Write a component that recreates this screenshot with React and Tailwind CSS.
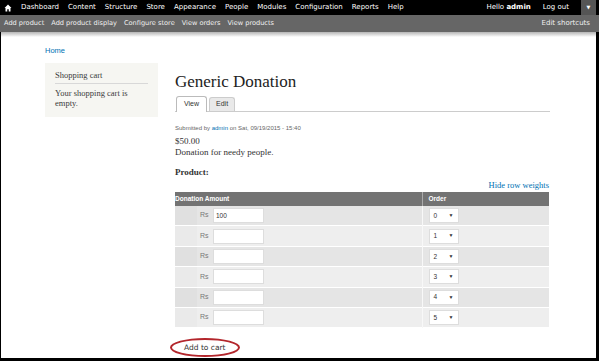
import React from 'react';

const topLinks = ['Dashboard', 'Content', 'Structure', 'Store', 'Appearance', 'People', 'Modules', 'Configuration', 'Reports', 'Help'];
const shortcuts = ['Add product', 'Add product display', 'Configure store', 'View orders', 'View products'];
const rows = [
  { amount: '100', order: '0' },
  { amount: '', order: '1' },
  { amount: '', order: '2' },
  { amount: '', order: '3' },
  { amount: '', order: '4' },
  { amount: '', order: '5' },
];

const sans = { fontFamily: '"DejaVu Sans", Verdana, sans-serif' };
const serif = { fontFamily: '"Liberation Serif", Georgia, serif' };
const arial = { fontFamily: '"Liberation Sans", Arial, sans-serif' };

function HomeIcon() {
  return (
    <svg width="8" height="8" viewBox="0 0 16 16" fill="#fff">
      <path d="M8 1 L1 8 H3 V15 H6.5 V10.5 H9.5 V15 H13 V8 H15 Z" />
    </svg>
  );
}

export default function App() {
  return (
    <div className="w-[599px] h-[361px] bg-black overflow-hidden flex flex-col">
      {/* Admin toolbar */}
      <div className="h-[15px] flex items-center text-[7px] text-white" style={sans}>
        <div className="w-[21px] flex justify-center pr-[6px]"><HomeIcon /></div>
        <div className="flex gap-[9px]">
          {topLinks.map(l => <span key={l}>{l}</span>)}
        </div>
        <div className="ml-auto flex items-center gap-[12px] h-full">
          <span>Hello <b>admin</b></span>
          <span>Log out</span>
          <div className="w-[15px] h-full bg-[#555] flex items-center justify-center text-[5px] mr-[3px]">▼</div>
        </div>
      </div>
      <div className="h-[17px] bg-[#666] flex items-center px-[4px] text-[6.6px] text-[#f0f0f0]" style={sans}>
        <div className="flex gap-[7px]">
          {shortcuts.map(s => <span key={s}>{s}</span>)}
        </div>
        <span className="ml-auto mr-[5px] text-[7px]">Edit shortcuts</span>
      </div>

      {/* Page */}
      <div className="flex-1 bg-white ml-[1px] mr-[3px] mb-[3px]">
        <div className="h-[5px] bg-gradient-to-b from-[#b5b5b5] to-white" />
        <div className="pl-[44px] pt-[9px] h-[19px] text-[7.5px] leading-[10px] text-[#0071b3]" style={arial}>Home</div>

        <div className="flex pl-[44px] pt-[7px]">
          {/* Sidebar */}
          <div className="w-[113px] h-[54px] bg-[#f6f6f2] px-[10px] pt-[7px] text-[8.5px] leading-[10px] text-[#3b3b3b]" style={serif}>
            <div className="pb-[3px] border-b border-[#d8d8d8]">Shopping cart</div>
            <div className="pt-[4px] pr-[10px]">Your shopping cart is empty.</div>
          </div>

          {/* Main */}
          <div className="ml-[17px] w-[375px]">
            <h1 className="text-[17px] leading-[22px] mt-[8px] text-[#222]" style={serif}>Generic Donation</h1>
            <div className="mt-[3px] flex items-end gap-[2px] border-b border-[#ccc] pl-[1px] text-[7px]" style={arial}>
              <div className="h-[16px] px-[7px] flex items-center bg-white border border-b-0 border-[#bbb] rounded-t-[3px] text-[#333] -mb-px">View</div>
              <div className="h-[14px] px-[6px] flex items-center bg-[#e9e9e9] border border-b-0 border-[#ccc] rounded-t-[3px] text-[#333]">Edit</div>
            </div>

            <div className="mt-[12px] text-[6px] text-[#666]" style={arial}>
              Submitted by <span className="text-[#0071b3]">admin</span> on Sat, 09/19/2015 - 15:40
            </div>
            <div className="text-[9px] leading-[11px] text-[#333] mt-[3px]" style={serif}>
              <div>$50.00</div>
              <div>Donation for needy people.</div>
            </div>

            <div className="mt-[8px] text-[9px] font-bold text-[#333]" style={serif}>Product:</div>
            <div className="text-right text-[8.5px] leading-[10px] text-[#0071b3] mr-[1px]" style={serif}>Hide row weights</div>

            <table className="w-[374px] mt-[2px] border-collapse" style={arial}>
              <thead>
                <tr className="h-[14px] bg-[#737373] text-white text-[6.5px] font-bold text-left">
                  <th className="p-0 font-bold" colSpan={2}>Donation Amount</th>
                  <th className="pl-[6px] w-[127px] border-l border-[#aaa] font-bold">Order</th>
                </tr>
              </thead>
              <tbody>
                {rows.map((r, i) => (
                  <tr key={i} className={`h-[20.4px] border-b border-white ${i % 2 === 0 ? 'bg-[#e5e5e5]' : 'bg-[#eeeeee]'}`}>
                    <td className={`w-[22px] p-0 ${i % 2 === 0 ? 'bg-[#e0e0e0]' : 'bg-[#eaeaea]'}`} />
                    <td className="p-0">
                      <div className="flex items-center pl-[3px] text-[7px] text-[#777]">
                        <span className="w-[13px]">Rs</span>
                        <div className="w-[51px] h-[15px] bg-white border border-[#ddd] text-[6.5px] text-[#333] flex items-center pl-[2px]">{r.amount}</div>
                      </div>
                    </td>
                    <td className="p-0 pl-[6px] border-l border-[#f8f8f8]">
                      <div className="w-[30px] h-[15px] bg-white border border-[#ddd] flex items-center justify-between px-[4px] text-[6.5px] text-[#333]">
                        <span>{r.order}</span>
                        <span className="text-[5px]">▼</span>
                      </div>
                    </td>
                  </tr>
                ))}
              </tbody>
            </table>

            <div className="mt-[10px] ml-[-5px] flex">
              <span className="flex items-center h-[19px] px-[12px] rounded-[50%] border-2 border-[#b3262c] text-[7.5px] text-[#333]" style={sans}>Add to cart</span>
            </div>
          </div>
        </div>
      </div>
    </div>
  );
}
